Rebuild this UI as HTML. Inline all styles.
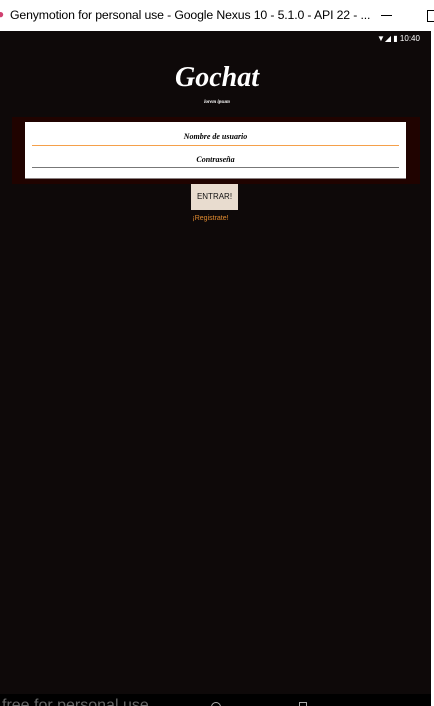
<html><head><style>
body{margin:0;width:434px;height:706px;overflow:hidden;background:#fff;font-family:"Liberation Sans",sans-serif;position:relative}
.a{position:absolute}
</style></head><body>
<div class="a" style="left:0;top:0;width:434px;height:31px;background:#fff"></div>
<div class="a" style="left:-3px;top:7px;color:#d04070;font-size:12px">●</div>
<div class="a" style="left:10px;top:8px;font-size:12.3px;letter-spacing:-0.15px;color:#000;white-space:nowrap">Genymotion for personal use - Google Nexus 10 - 5.1.0 - API 22 - ...</div>
<div class="a" style="left:381px;top:15px;width:11px;height:1px;background:#000"></div>
<div class="a" style="left:427px;top:10px;width:10px;height:10px;border:1px solid #000"></div>
<div class="a" style="left:0;top:31px;width:431px;height:663px;background:#0e0909"></div>
<div class="a" style="left:431px;top:31px;width:3px;height:675px;background:#fff"></div>
<div class="a" style="left:0;top:694px;width:431px;height:12px;background:#000;overflow:hidden">
<div class="a" style="left:2px;top:3px;font-size:16px;color:#666;line-height:18px;white-space:nowrap">free for personal use</div>
<div class="a" style="left:211px;top:8px;width:8px;height:8px;border:1px solid #aaa;border-radius:50%"></div>
<div class="a" style="left:299px;top:8px;width:6px;height:8px;border:1px solid #aaa"></div>
</div>
<div class="a" style="left:377px;top:34px;font-size:8px;color:#fff">▼◢ ▮ 10:40</div>
<div class="a" style="left:0;top:62px;width:434px;text-align:center;color:#fff;font:italic bold 28px 'Liberation Serif',serif">Gochat</div>
<div class="a" style="left:0;top:100px;width:434px;text-align:center;color:#fff;font:italic bold 5px 'Liberation Serif',serif">lorem ipsum</div>
<div class="a" style="left:12px;top:117px;width:408px;height:67px;background:#200300"></div>
<div class="a" style="left:25px;top:122px;width:381px;height:56px;background:#fff;border-bottom:1px solid #8a8080"></div>
<div class="a" style="left:25px;top:132px;width:381px;text-align:center;font:italic bold 8px 'Liberation Serif',serif">Nombre de usuario</div>
<div class="a" style="left:32px;top:145px;width:367px;height:1px;background:#f5a04a"></div>
<div class="a" style="left:25px;top:155px;width:381px;text-align:center;font:italic bold 8px 'Liberation Serif',serif">Contraseña</div>
<div class="a" style="left:32px;top:167px;width:367px;height:1px;background:#777"></div>
<div class="a" style="left:191px;top:184px;width:47px;height:26px;background:#e8dccf;text-align:center;line-height:26px;font-size:8px;color:#111">ENTRAR!</div>
<div class="a" style="left:0;top:215px;width:421px;text-align:center;font-size:7px;color:#e08a30">¡Registrate!</div>
</body></html>
